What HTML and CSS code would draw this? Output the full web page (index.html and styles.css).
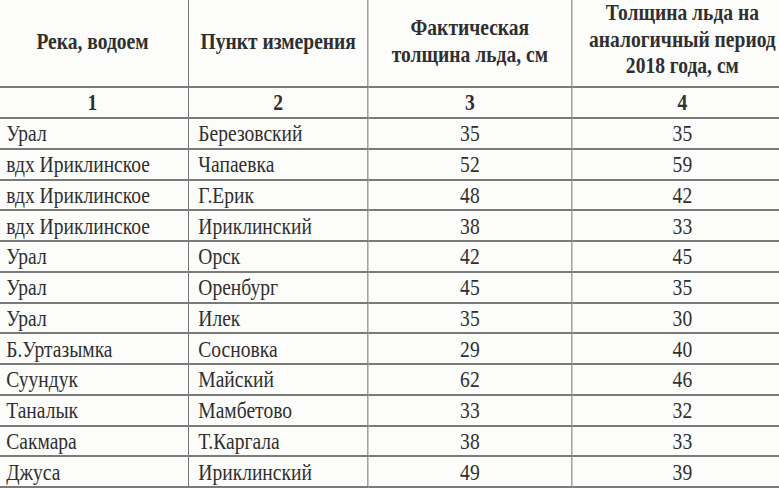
FILE: index.html
```html
<!DOCTYPE html>
<html lang="ru">
<head>
<meta charset="utf-8">
<title>Толщина льда</title>
<link rel="stylesheet" href="styles.css">
</head>
<body>
<div class="page">
<table class="ice">
<colgroup>
<col class="c1"><col class="c2"><col class="c3"><col class="c4">
</colgroup>
<thead>
<tr class="head">
<th>Река, водоем</th>
<th>Пункт измерения</th>
<th>Фактическая<br>толщина льда, см</th>
<th class="h4">Толщина льда на<br>аналогичный период<br>2018 года, см</th>
</tr>
<tr class="nums">
<th>1</th><th>2</th><th>3</th><th>4</th>
</tr>
</thead>
<tbody>
<tr><td>Урал</td><td>Березовский</td><td class="n">35</td><td class="n">35</td></tr>
<tr><td>вдх Ириклинское</td><td>Чапаевка</td><td class="n">52</td><td class="n">59</td></tr>
<tr><td>вдх Ириклинское</td><td>Г.Ерик</td><td class="n">48</td><td class="n">42</td></tr>
<tr><td>вдх Ириклинское</td><td>Ириклинский</td><td class="n">38</td><td class="n">33</td></tr>
<tr><td>Урал</td><td>Орск</td><td class="n">42</td><td class="n">45</td></tr>
<tr><td>Урал</td><td>Оренбург</td><td class="n">45</td><td class="n">35</td></tr>
<tr><td>Урал</td><td>Илек</td><td class="n">35</td><td class="n">30</td></tr>
<tr><td>Б.Уртазымка</td><td>Сосновка</td><td class="n">29</td><td class="n">40</td></tr>
<tr><td>Суундук</td><td>Майский</td><td class="n">62</td><td class="n">46</td></tr>
<tr><td>Таналык</td><td>Мамбетово</td><td class="n">33</td><td class="n">32</td></tr>
<tr><td>Сакмара</td><td>Т.Каргала</td><td class="n">38</td><td class="n">33</td></tr>
<tr><td>Джуса</td><td>Ириклинский</td><td class="n">49</td><td class="n">39</td></tr>
</tbody>
</table>
</div>
</body>
</html>
```
FILE: styles.css
```css
html, body {
  margin: 0;
  padding: 0;
  overflow: hidden;
  background: #fcfcfa;
}
.page {
  width: 779px;
  height: 488px;
  overflow: hidden;
}
.ice {
  border-collapse: collapse;
  table-layout: fixed;
  width: 937px;
  margin-left: -4px;
  transform: scaleX(0.85);
  transform-origin: 0 0;
  font-family: "Liberation Serif", "Tinos", "DejaVu Serif", "Times New Roman", serif;
  color: #2f2f2f;
}
.c1 { width: 226px; }
.c2 { width: 211px; }
.c3 { width: 240px; }
.c4 { width: 260px; }

.ice th, .ice td {
  border-left: 1.4px solid #5a5a5a;
  border-right: 1.4px solid #5a5a5a;
  border-bottom: 2px solid #7a7a7a;
  padding: 0;
  overflow: hidden;
}
.head th {
  height: 83px;
  font-size: 23px;
  font-weight: bold;
  line-height: 26.7px;
  text-align: center;
  vertical-align: middle;
  padding-bottom: 2px;
}
.head .h4 {
  padding-bottom: 6px;
  height: 79px;
}
.nums th {
  height: 29px;
  font-size: 23px;
  font-weight: bold;
  line-height: 24px;
  text-align: center;
  vertical-align: middle;
}
.ice td {
  height: 26.75px;
  font-size: 23px;
  line-height: 24px;
  padding: 2px 0 0 11px;
  vertical-align: middle;
  white-space: nowrap;
}
.ice td.n {
  text-align: center;
  padding-left: 0;
}
```
